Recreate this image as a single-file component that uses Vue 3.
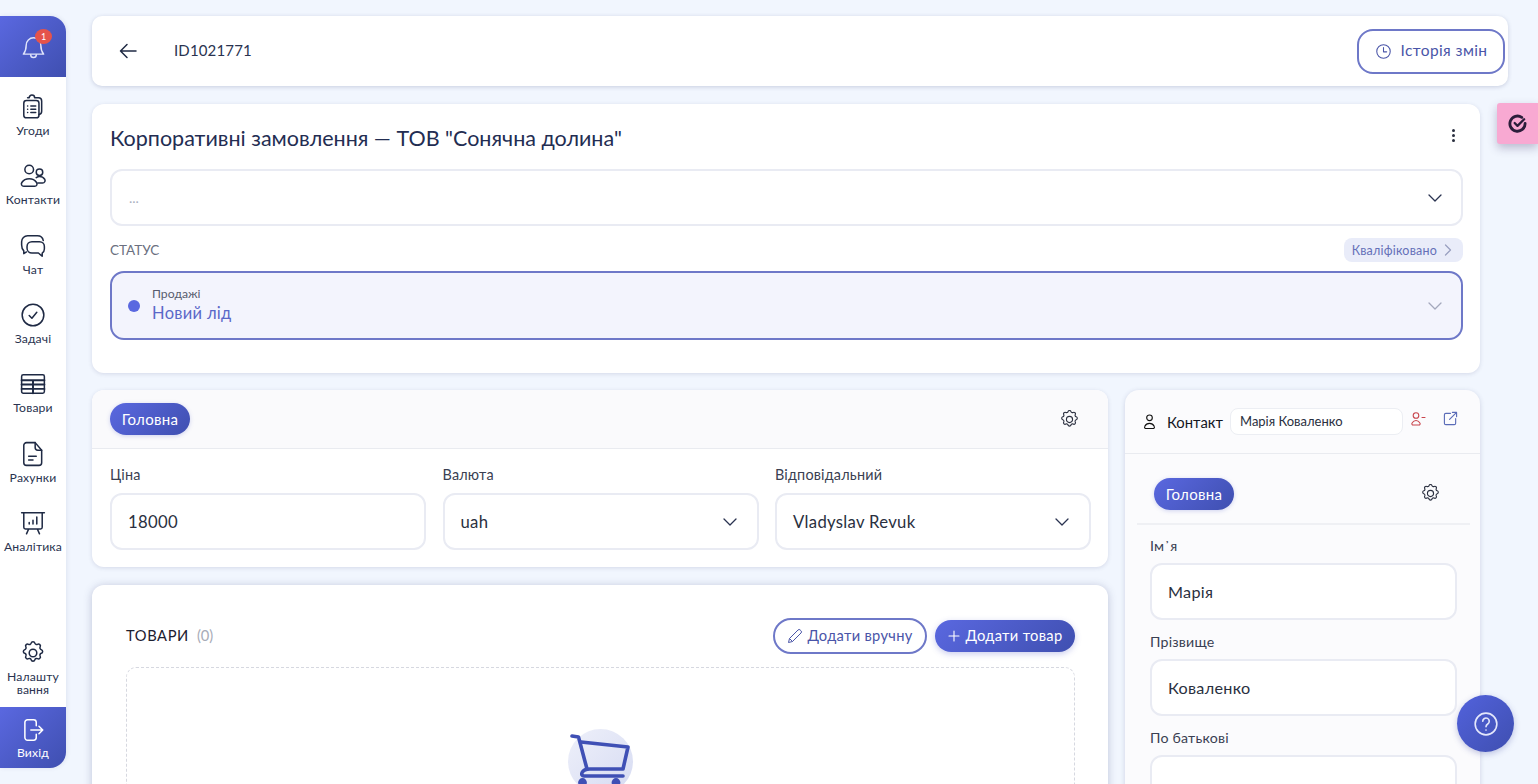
<template>
  <div class="page">
    <aside class="sidebar">
      <div class="bell-box">
        <svg class="bell" viewBox="0 0 24 24" fill="none" stroke="#dfe3fa" stroke-width="1.300" stroke-linecap="round" stroke-linejoin="round">
          <path d="M12 2.500a6.500 6.500 0 0 0-6.500 6.500c0 3.500-.6 5.600-2.500 8h18c-1.900-2.400-2.500-4.500-2.500-8A6.500 6.500 0 0 0 12 2.500z" />
          <path d="M9.500 17.500a2.500 2.500 0 0 0 5 0" />
        </svg>
        <span class="badge">1</span>
      </div>

      <nav class="nav">
        <a v-for="item in navItems" :key="item.label" class="nav-item">
          <svg viewBox="0 0 24 24" fill="none" stroke="#1f2a44" stroke-width="1.400" stroke-linecap="round" stroke-linejoin="round" v-html="item.icon"></svg>
          <span>{{ item.label }}</span>
        </a>
      </nav>

      <a class="nav-item settings">
        <svg viewBox="0 0 24 24" fill="none" stroke="#1f2a44" stroke-width="1.400" stroke-linecap="round" stroke-linejoin="round" v-html="gear"></svg>
        <span>Налашту<br />вання</span>
      </a>
      <a class="exit">
        <svg viewBox="0 0 24 24" fill="none" stroke="#fff" stroke-width="1.400" stroke-linecap="round" stroke-linejoin="round">
          <path d="M15 8V5a2.500 2.500 0 0 0-2.500-2.500H7A2.500 2.500 0 0 0 4.500 5v14A2.500 2.500 0 0 0 7 21.500h5.500A2.500 2.500 0 0 0 15 19v-3" />
          <path d="M10 12h11M17.500 8.500 21 12l-3.500 3.500" />
        </svg>
        <span>Вихід</span>
      </a>
    </aside>

    <main class="main">
      <header class="topbar">
        <svg class="back" viewBox="0 0 24 24" fill="none" stroke="#1f2a44" stroke-width="1.500" stroke-linecap="round" stroke-linejoin="round">
          <path d="M20 12H4.500M11 5.500 4.500 12l6.500 6.500" />
        </svg>
        <span class="deal-id">ID1021771</span>
        <button class="history">
          <svg viewBox="0 0 24 24" fill="none" stroke="#4a55a8" stroke-width="1.500" stroke-linecap="round" stroke-linejoin="round">
            <circle cx="12" cy="12" r="9.500" />
            <path d="M12 6.500V12.500h4.500" />
          </svg>
          Історія змін
        </button>
      </header>

      <section class="card deal">
        <div class="deal-head">
          <h1>Корпоративні замовлення — ТОВ "Сонячна долина"</h1>
          <span class="dots"><i></i><i></i><i></i></span>
        </div>
        <div class="select-line">
          <span class="muted">...</span>
          <svg class="chev" viewBox="0 0 16 10" fill="none" stroke="#2a3350" stroke-width="1.300" stroke-linecap="round" stroke-linejoin="round"><path d="M2 2l6 6 6-6" /></svg>
        </div>
        <div class="status-row">
          <span class="status-label">СТАТУС</span>
          <span class="qualified">
            Кваліфіковано
            <svg viewBox="0 0 10 14" fill="none" stroke="#9aa0c0" stroke-width="1.300" stroke-linecap="round" stroke-linejoin="round"><path d="M2.500 2l5 5-5 5" /></svg>
          </span>
        </div>
        <div class="status-select">
          <span class="dot"></span>
          <div class="status-text">
            <small>Продажі</small>
            <strong>Новий лід</strong>
          </div>
          <svg class="chev" viewBox="0 0 16 10" fill="none" stroke="#a4a8bc" stroke-width="1.300" stroke-linecap="round" stroke-linejoin="round"><path d="M2 2l6 6 6-6" /></svg>
        </div>
      </section>

      <div class="columns">
        <div class="left-col">
          <section class="card main-fields">
            <div class="tab-row">
              <span class="pill">Головна</span>
              <svg class="gear" viewBox="0 0 24 24" fill="none" stroke="#2a2f3f" stroke-width="1.300" stroke-linecap="round" stroke-linejoin="round" v-html="gear"></svg>
            </div>
            <div class="fields">
              <label v-for="field in fields" :key="field.label" class="field">
                <span>{{ field.label }}</span>
                <div class="input">
                  {{ field.value }}
                  <svg v-if="field.select" class="chev" viewBox="0 0 16 10" fill="none" stroke="#2a3350" stroke-width="1.300" stroke-linecap="round" stroke-linejoin="round"><path d="M2 2l6 6 6-6" /></svg>
                </div>
              </label>
            </div>
          </section>

          <section class="card products">
            <div class="products-head">
              <span class="products-title">ТОВАРИ</span>
              <span class="products-count">(0)</span>
              <button class="btn-outline">
                <svg viewBox="0 0 16 16" fill="none" stroke="#4a55a8" stroke-width="1" stroke-linejoin="round"><path d="M1.500 14.500l1-4L11 2a1.500 1.500 0 0 1 2.200 0l.8.800a1.500 1.500 0 0 1 0 2.200l-8.500 8.500z" /><path d="M2.500 10.500l3 3" /></svg>
                Додати вручну
              </button>
              <button class="btn-solid">
                <svg viewBox="0 0 12 12" fill="none" stroke="#fff" stroke-width="1.100" stroke-linecap="round"><path d="M6 1v10M1 6h10" /></svg>
                Додати товар
              </button>
            </div>
            <div class="dropzone">
              <div class="cart-circle">
                <svg viewBox="0 0 65 65" fill="none" stroke="#3f50b5" stroke-width="3.600" stroke-linecap="round" stroke-linejoin="round">
                  <path d="M4 7l6.500 1L19 40" />
                  <path d="M13 13l47 5-5 22H22c-9 0-10 7-6 7h39" />
                  <circle cx="14.500" cy="53.500" r="2.600" fill="#3f50b5" />
                  <circle cx="48" cy="53.500" r="2.600" fill="#3f50b5" />
                </svg>
              </div>
            </div>
          </section>
        </div>

        <section class="card contact">
          <div class="contact-head">
            <svg class="person" viewBox="0 0 16 18" fill="none" stroke="#111" stroke-width="1.200" stroke-linecap="round"><circle cx="8" cy="5" r="3" /><path d="M3.500 16.500h9a2 2 0 0 0 .5-2.500c-1-2-3-3-5-3s-4 1-5 3a2 2 0 0 0 .5 2.500z" /></svg>
            <span class="contact-title">Контакт</span>
            <span class="contact-name">Марія Коваленко</span>
            <svg class="icon-remove" viewBox="0 0 16 16" fill="none" stroke="#c8444c" stroke-width="1.100" stroke-linecap="round"><circle cx="6" cy="4.500" r="2.800" /><path d="M2.500 14h7a1.500 1.500 0 0 0 .3-2.200c-1-1.500-2.300-2.300-3.800-2.300s-2.800.8-3.800 2.300A1.500 1.500 0 0 0 2.500 14zM12 6.500h3" /></svg>
            <svg class="icon-open" viewBox="0 0 16 16" fill="none" stroke="#5a6bb8" stroke-width="1.200" stroke-linecap="round" stroke-linejoin="round"><path d="M8 2.500H3A1.500 1.500 0 0 0 1.500 4v9A1.500 1.500 0 0 0 3 14.500h9A1.500 1.500 0 0 0 13.500 13V8M7 9l7.500-7.500M10 1.500h4.500V6" /></svg>
          </div>
          <div class="contact-body">
            <div class="contact-tabs">
              <span class="pill">Головна</span>
              <svg class="gear" viewBox="0 0 24 24" fill="none" stroke="#2a2f3f" stroke-width="1.300" stroke-linecap="round" stroke-linejoin="round" v-html="gear"></svg>
            </div>
            <div class="contact-fields">
              <label v-for="field in contactFields" :key="field.label" class="field">
                <span>{{ field.label }}</span>
                <div class="input">{{ field.value }}</div>
              </label>
            </div>
          </div>
        </section>
      </div>
    </main>

    <div class="pink-tab">
      <svg viewBox="0 0 20 20" fill="none" stroke="#2b1d3a" stroke-width="3" stroke-linecap="round" stroke-linejoin="round">
        <path d="M14.500 3.500A8 8 0 1 0 18 10" />
        <path d="M7 9.500l3 3 7-7" stroke-width="2.400" />
      </svg>
    </div>
    <div class="help">
      <svg viewBox="0 0 24 24" fill="none" stroke="#e4e7fb" stroke-width="1.500" stroke-linecap="round" stroke-linejoin="round">
        <circle cx="12" cy="12" r="10" />
        <path d="M9 9.500a3 3 0 1 1 4.600 2.500c-1 .7-1.600 1.300-1.600 2.500" />
        <path d="M12 17.500v.1" />
      </svg>
    </div>
  </div>
</template>

<script setup>
const gear = '<path d="M12 8.500a3.500 3.500 0 1 0 0 7 3.500 3.500 0 0 0 0-7z"/><path d="M10.300 2.900c.4-1.600 3-1.600 3.400 0 .3 1.100 1.500 1.600 2.500 1.100 1.500-.9 3.300.9 2.400 2.400-.5 1-.1 2.200 1.100 2.500 1.600.4 1.600 3 0 3.400-1.200.3-1.600 1.500-1.100 2.500.9 1.500-.9 3.300-2.400 2.400-1-.5-2.200-.1-2.500 1.100-.4 1.600-3 1.600-3.400 0-.3-1.200-1.500-1.600-2.500-1.100-1.500.9-3.300-.9-2.400-2.400.5-1 .1-2.200-1.100-2.500-1.600-.4-1.600-3 0-3.400 1.200-.3 1.600-1.500 1.100-2.500-.9-1.500.9-3.300 2.400-2.400 1 .5 2.200.1 2.500-1.100z"/>'

const navItems = [
  {
    label: 'Угоди',
    icon: '<rect x="3.500" y="6" width="14" height="16" rx="2.500"/><path d="M7 3.500h1.500a2.500 2.500 0 0 1 5 0h3.500a3 3 0 0 1 3 3V16a3 3 0 0 1-2.500 3"/><path d="M7 11h.1M10 11h4.500M7 14h.1M10 14h4.500M7 17h.1M10 17h4.500"/>'
  },
  {
    label: 'Контакти',
    icon: '<circle cx="8.500" cy="6" r="4"/><circle cx="18" cy="8.500" r="3"/><path d="M3.500 21.500h10c2 0 2.800-2 1.800-3.500-1.500-2.300-4-3.500-6.800-3.500s-5.300 1.200-6.800 3.500c-1 1.500-.2 3.500 1.800 3.500z"/><path d="M15 13.500c.9-.6 2-1 3-1 2 0 3.800 1 4.800 2.500.8 1.500 0 3.500-2 3.500h-4.300"/>'
  },
  {
    label: 'Чат',
    icon: '<path d="M6 17.500 3.500 19v-2.500C2 15 1.500 13.500 1.500 11V8a5.500 5.500 0 0 1 5.500-5.500h9A5.500 5.500 0 0 1 21.500 7"/><path d="M11 8h7a4.500 4.500 0 0 1 4.500 4.500v2A4.500 4.500 0 0 1 20.500 18.500V21.500l-3.500-3h-6a4.500 4.500 0 0 1-4.500-4.500v-1.500A4.500 4.500 0 0 1 11 8z"/>'
  },
  {
    label: 'Задачі',
    icon: '<circle cx="12" cy="12" r="10"/><path d="M8.500 12.500l2.500 2.500 4.500-5.500"/>'
  },
  {
    label: 'Товари',
    icon: '<rect x="1.500" y="3.500" width="21" height="17" rx="1.500"/><path d="M1.500 8.500h21M1.500 12.500h21M1.500 16.500h21M12 8.500v12" stroke-width="1.800"/>'
  },
  {
    label: 'Рахунки',
    icon: '<path d="M6 1.500h8l6 7V20a2.500 2.500 0 0 1-2.500 2.500h-11.500A2.500 2.500 0 0 1 3.500 20V4A2.500 2.500 0 0 1 6 1.500z"/><path d="M14 1.500V6a2.500 2.500 0 0 0 2.500 2.500H20M8 14h7M8 17.500h4"/>'
  },
  {
    label: 'Аналітика',
    icon: '<path d="M1.500 2.500h21M3.500 2.500V16a1.500 1.500 0 0 0 1.500 1.500h14a1.500 1.500 0 0 0 1.500-1.500V2.500M8 17.500 6 22M16 17.500l2 4.500M8.500 13v-1.500M12 13v-3.500M15.500 13V6.500"/>'
  }
]

const fields = [
  { label: 'Ціна', value: '18000', select: false },
  { label: 'Валюта', value: 'uah', select: true },
  { label: 'Відповідальний', value: 'Vladyslav Revuk', select: true }
]

const contactFields = [
  { label: 'Ім᾿я', value: 'Марія' },
  { label: 'Прізвище', value: 'Коваленко' },
  { label: 'По батькові', value: '' }
]
</script>

<style>
html,
body {
  margin: 0;
  height: 100%;
  overflow: hidden;
  background: #f1f6fe;
}
</style>

<style scoped>
.page {
  display: flex;
  align-items: flex-start;
  height: 784px;
  padding-top: 16px;
  box-sizing: border-box;
  overflow: hidden;
  position: relative;
  font-family: Lato, "Noto Sans", sans-serif;
  color: #1f2a44;
}

.sidebar {
  width: 66px;
  height: 752px;
  flex: none;
  display: flex;
  flex-direction: column;
  background: #fff;
  border-radius: 0 16px 16px 0;
  box-shadow: 1px 0 4px rgba(60, 70, 120, 0.1);
}

.bell-box {
  height: 61px;
  flex: none;
  display: flex;
  align-items: center;
  justify-content: center;
  position: relative;
  background: linear-gradient(135deg, #5a68e0, #3f4fb0);
  border-radius: 0 16px 0 0;
}

.bell {
  width: 27px;
  height: 27px;
  margin-top: 3px;
}

.badge {
  position: absolute;
  top: 13px;
  left: 35px;
  width: 17px;
  height: 15px;
  border-radius: 50%;
  background: #e5534b;
  color: #fff;
  font-size: 9px;
  line-height: 15px;
  text-align: center;
}

.nav {
  display: flex;
  flex-direction: column;
  padding-top: 17px;
  gap: 0;
}

.nav-item {
  height: 69.33px;
  display: flex;
  flex-direction: column;
  align-items: center;
  font-size: 12.200px;
  letter-spacing: 0.15px;
  line-height: 13px;
  text-align: center;
  color: #2a3350;
}

.nav-item svg {
  width: 26px;
  height: 26px;
  margin-bottom: 4px;
}

.settings {
  margin-top: auto;
  height: 67px;
}

.exit {
  height: 61px;
  flex: none;
  display: flex;
  flex-direction: column;
  align-items: center;
  justify-content: flex-end;
  padding-bottom: 9px;
  box-sizing: border-box;
  color: #fff;
  font-size: 12.200px;
  letter-spacing: 0.15px;
  line-height: 13px;
  background: linear-gradient(135deg, #5a68e0, #3f4fb0);
  border-radius: 0 0 16px 0;
}

.exit svg {
  width: 26px;
  height: 26px;
  margin-bottom: 3px;
}

.main {
  flex: none;
  width: 1416px;
  margin-left: 26px;
  display: flex;
  flex-direction: column;
}

.card {
  background: #fff;
  border-radius: 12px;
  box-shadow: 0 1px 4px rgba(60, 70, 120, 0.16);
}

.topbar {
  height: 70px;
  flex: none;
  display: flex;
  align-items: center;
  padding: 0 3px 0 24px;
  box-sizing: border-box;
  background: #fff;
  border-radius: 10px;
  box-shadow: 0 1px 4px rgba(60, 70, 120, 0.22);
}

.back {
  width: 24px;
  height: 24px;
}

.deal-id {
  margin-left: 34px;
  margin-bottom: 2px;
  font-size: 15px;
  letter-spacing: 0.15px;
  color: #2a3350;
}

.history {
  margin-left: auto;
  width: 148px;
  height: 45px;
  display: flex;
  align-items: center;
  justify-content: center;
  gap: 9px;
  padding: 0 0 2px;
  border: 2px solid #6e78c8;
  border-radius: 16px;
  background: #fff;
  font-family: inherit;
  font-size: 15.500px;
  letter-spacing: 0.4px;
  color: #4a55a8;
}

.history svg {
  width: 17px;
  height: 17px;
  margin-top: 2px;
}

.deal {
  width: 1388px;
  margin-top: 18px;
  height: 269px;
  padding: 17px 17px 0 18px;
  box-sizing: border-box;
}

.deal-head {
  display: flex;
  align-items: center;
  justify-content: space-between;
  height: 34px;
  padding-right: 6px;
}

h1 {
  margin: 0 0 1px;
  font-size: 21.500px;
  font-weight: 400;
  color: #232d52;
}

.dots {
  display: flex;
  flex-direction: column;
  gap: 2px;
  margin-right: 2px;
  margin-top: -6px;
}

.dots i {
  width: 3px;
  height: 3px;
  border-radius: 50%;
  background: #2a2f3f;
}

.select-line {
  margin-top: 14px;
  height: 57px;
  display: flex;
  align-items: center;
  justify-content: space-between;
  padding: 0 18px 0 17px;
  box-sizing: border-box;
  border: 2px solid #e9ebf3;
  border-radius: 12px;
}

.muted {
  color: #aab0bf;
  font-size: 14px;
}

.chev {
  width: 16px;
  height: 10px;
  flex: none;
}

.status-row {
  margin-top: 12px;
  height: 24px;
  display: flex;
  align-items: center;
  justify-content: space-between;
}

.status-label {
  font-size: 13.500px;
  color: #6b7080;
}

.qualified {
  height: 24px;
  display: flex;
  align-items: center;
  gap: 6px;
  padding: 0 10px 0 8px;
  border-radius: 8px;
  background: #e9ecf9;
  color: #6570b8;
  font-size: 12.500px;
  letter-spacing: 0.2px;
}

.qualified svg {
  width: 10px;
  height: 14px;
}

.status-select {
  margin-top: 9px;
  height: 69px;
  display: flex;
  align-items: center;
  padding: 0 18px 0 16px;
  box-sizing: border-box;
  border: 2px solid #6e78c8;
  border-radius: 14px;
  background: #f3f4fd;
}

.dot {
  width: 12px;
  height: 12px;
  border-radius: 50%;
  background: #5a68e0;
  flex: none;
}

.status-text {
  display: flex;
  flex-direction: column;
  margin: -2px 0 0 12px;
  flex: 1;
}

.status-text small {
  font-size: 12.200px;
  line-height: 16px;
  color: #565b6e;
}

.status-text strong {
  font-size: 16.500px;
  line-height: 22px;
  font-weight: 400;
  color: #5a68c8;
  letter-spacing: 0.3px;
}

.columns {
  display: flex;
  width: 1388px;
  gap: 17px;
  margin-top: 17px;
}

.left-col {
  width: 1016px;
  flex: none;
  display: flex;
  flex-direction: column;
  gap: 18px;
}

.main-fields {
  height: 177px;
  flex: none;
}

.tab-row {
  height: 58px;
  display: flex;
  align-items: center;
  justify-content: space-between;
  padding: 0 28px 0 18px;
  background: #fafafc;
  border-bottom: 1px solid #e9ebf0;
  border-radius: 12px 12px 0 0;
}

.pill {
  width: 80px;
  height: 32px;
  display: inline-flex;
  align-items: center;
  justify-content: center;
  border-radius: 16px;
  background: linear-gradient(135deg, #5a68e0, #3f4fb0);
  color: #fff;
  font-size: 15px;
  letter-spacing: 0.3px;
  box-shadow: 0 1px 4px rgba(80, 90, 200, 0.25);
}

.gear {
  width: 21px;
  height: 21px;
}

.fields {
  display: grid;
  grid-template-columns: repeat(3, 316px);
  gap: 16.500px;
  padding: 17px 17px 0 18px;
}

.field {
  display: flex;
  flex-direction: column;
  font-size: 14.400px;
  color: #3a3f52;
}

.field > span {
  line-height: 18px;
  letter-spacing: 0.2px;
}

.input {
  margin-top: 9px;
  height: 57px;
  display: flex;
  align-items: center;
  justify-content: space-between;
  padding: 0 19px 0 16px;
  box-sizing: border-box;
  border: 2px solid #e9ebf3;
  border-radius: 12px;
  background: #fff;
  font-size: 16.700px;
  letter-spacing: 0.3px;
  color: #2a3040;
}

.products {
  height: 260px;
  flex: none;
  padding: 33px 33px 0 34px;
  box-sizing: border-box;
  box-shadow: 0 1px 8px rgba(60, 70, 120, 0.28);
}

.products-head {
  height: 36px;
  display: flex;
  align-items: center;
}

.products-title {
  font-size: 14.700px;
  letter-spacing: 0.6px;
  color: #1c2030;
  margin-top: -2px;
}

.products-count {
  margin-left: 8px;
  margin-top: -2px;
  font-size: 14.700px;
  color: #a8acb8;
}

.btn-outline {
  margin-left: auto;
  width: 154px;
  height: 36px;
  display: flex;
  align-items: center;
  justify-content: center;
  gap: 4px;
  padding: 0 0 2px;
  border: 2px solid #6e78c8;
  border-radius: 18px;
  background: #fff;
  font-family: inherit;
  font-size: 14.700px;
  letter-spacing: 0.3px;
  color: #4a55a8;
}

.btn-outline svg {
  width: 16px;
  height: 16px;
  margin-top: 2px;
}

.btn-solid {
  margin-left: 8px;
  width: 140px;
  height: 32px;
  display: flex;
  align-items: center;
  justify-content: center;
  gap: 6px;
  padding: 0 0 2px;
  border: none;
  border-radius: 16px;
  background: linear-gradient(135deg, #5a68e0, #3f4fb0);
  font-family: inherit;
  font-size: 14.700px;
  letter-spacing: 0.3px;
  color: #fff;
  box-shadow: 0 2px 6px rgba(80, 90, 200, 0.3);
}

.btn-solid svg {
  width: 12px;
  height: 12px;
  margin-top: 2px;
}

.dropzone {
  margin-top: 13px;
  height: 300px;
  display: flex;
  justify-content: center;
  padding-top: 61px;
  box-sizing: border-box;
  border: 1px dashed #d6d8e0;
  border-radius: 10px;
}

.cart-circle {
  width: 65px;
  height: 65px;
  border-radius: 50%;
  background: linear-gradient(135deg, #eef0fa, #d6dbf2);
}

.cart-circle svg {
  display: block;
  width: 65px;
  height: 65px;
  overflow: visible;
}

.contact {
  width: 355px;
  height: 420px;
  flex: none;
  background: #fbfbfd;
  box-shadow: 0 1px 5px rgba(60, 70, 120, 0.2);
  border-radius: 14px;
}

.contact-head {
  height: 64px;
  display: flex;
  align-items: center;
  padding: 0 16px 0 17px;
  box-sizing: border-box;
  border-bottom: 1px solid #e9ebf0;
}

.person {
  width: 15px;
  height: 17px;
}

.contact-title {
  margin-left: 10px;
  width: 55px;
  font-size: 14.800px;
  color: #14161f;
}

.contact-name {
  margin-left: 8px;
  width: 173px;
  height: 27px;
  line-height: 25px;
  padding-left: 9px;
  box-sizing: border-box;
  border: 1px solid #eceef3;
  border-radius: 8px;
  background: #fff;
  font-size: 13px;
  color: #2a3040;
}

.icon-remove {
  width: 16px;
  height: 16px;
  margin-left: 7px;
  margin-top: -6px;
}

.icon-open {
  width: 15px;
  height: 15px;
  margin-left: 17px;
  margin-top: -6px;
}

.contact-body {
  padding: 0 10px 0 12px;
}

.contact-tabs {
  height: 71px;
  display: flex;
  align-items: center;
  justify-content: space-between;
  padding: 10px 29px 0 17px;
  box-sizing: border-box;
  border-bottom: 2px solid #eff0f4;
}

.contact-fields {
  display: flex;
  flex-direction: column;
  padding: 12px 13px 0 13px;
  gap: 13px;
}

.contact-fields .field {
  font-size: 14.200px;
}

.contact-fields .input {
  margin-top: 8px;
  background: #fff;
  font-size: 16.200px;
}

.pink-tab {
  position: absolute;
  top: 103px;
  left: 1497px;
  width: 41px;
  height: 41px;
  display: flex;
  align-items: center;
  justify-content: center;
  background: #f8a9d2;
  border-radius: 3px 0 0 3px;
  box-shadow: 0 4px 10px rgba(60, 50, 100, 0.3);
}

.pink-tab svg {
  width: 19px;
  height: 19px;
}

.help {
  position: absolute;
  top: 695px;
  left: 1457px;
  width: 57px;
  height: 57px;
  display: flex;
  align-items: center;
  justify-content: center;
  border-radius: 50%;
  background: linear-gradient(135deg, #5262dc, #3f4fb0);
  box-shadow: 0 2px 6px rgba(60, 70, 160, 0.3);
}

.help svg {
  width: 26px;
  height: 26px;
}
</style>
